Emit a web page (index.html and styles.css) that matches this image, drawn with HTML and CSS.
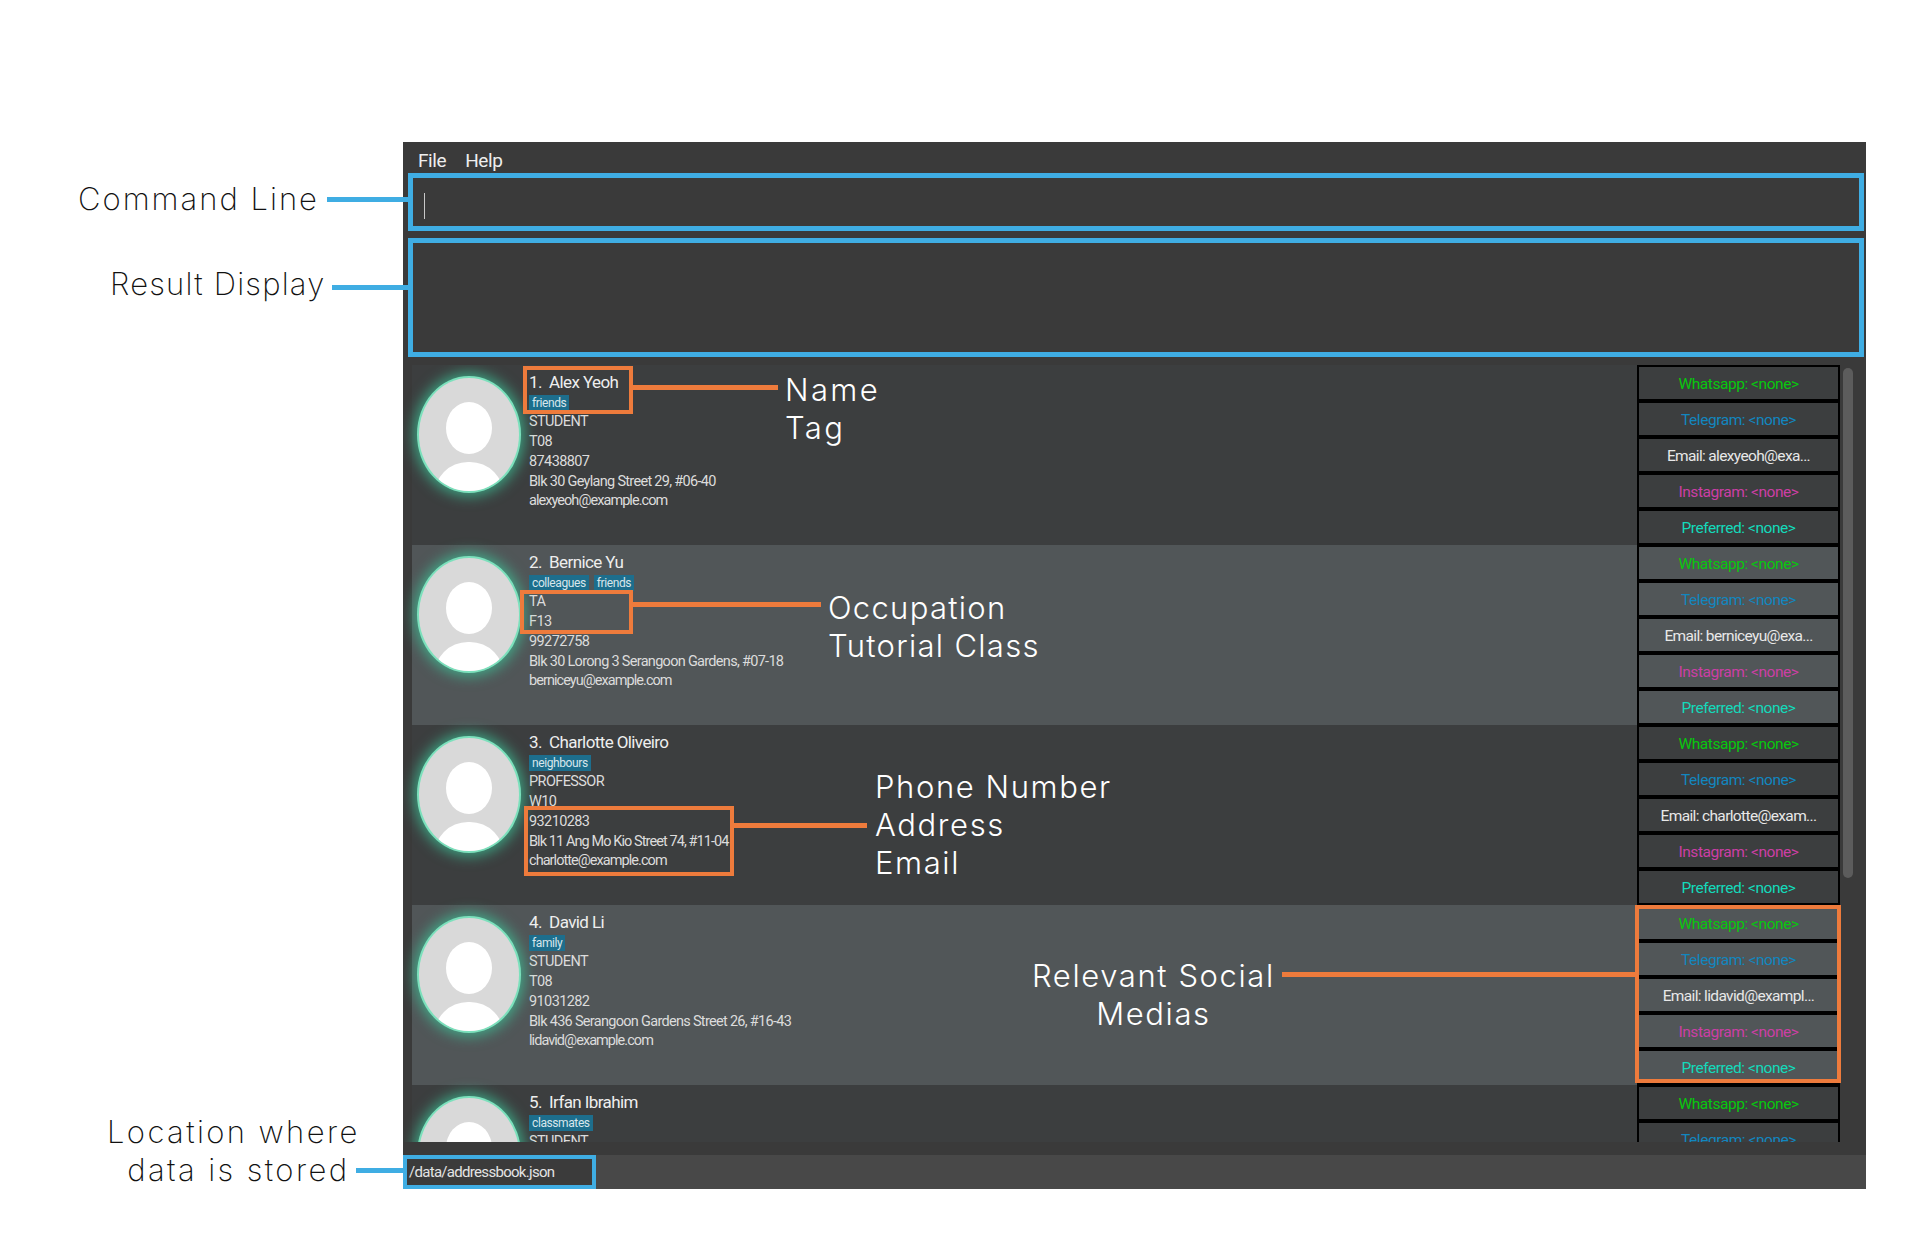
FILE: index.html
```html
<!DOCTYPE html>
<html lang="en">
<head>
  <meta charset="UTF-8">
  <title>Address Book - User Guide</title>
  <link rel="stylesheet" href="styles.css">
</head>
<body>

<div class="page">
  <div class="app">
    <div class="menu-bar">
      <span>File</span>
      <span>Help</span>
    </div>
    <div class="command-box"><div class="caret"></div></div>
    <div class="result-box"></div>

    <div class="list-wrap">
      <div class="list">

        <div class="row">
          <div class="avatar"></div>
          <div class="details">
            <div class="name">1.&nbsp; Alex Yeoh</div>
            <div class="tags"><span class="tag">friends</span></div>
            <div>STUDENT</div>
            <div>T08</div>
            <div>87438807</div>
            <div class="addr">Blk 30 Geylang Street 29, #06-40</div>
            <div class="mail">alexyeoh@example.com</div>
          </div>
          <div class="socials">
            <div class="social whatsapp">Whatsapp: &lt;none&gt;</div>
            <div class="social telegram">Telegram: &lt;none&gt;</div>
            <div class="social email">Email: alexyeoh@exa...</div>
            <div class="social instagram">Instagram: &lt;none&gt;</div>
            <div class="social preferred">Preferred: &lt;none&gt;</div>
          </div>
        </div>

        <div class="row">
          <div class="avatar"></div>
          <div class="details">
            <div class="name">2.&nbsp; Bernice Yu</div>
            <div class="tags"><span class="tag">colleagues</span><span class="tag">friends</span></div>
            <div>TA</div>
            <div>F13</div>
            <div>99272758</div>
            <div class="addr">Blk 30 Lorong 3 Serangoon Gardens, #07-18</div>
            <div class="mail">berniceyu@example.com</div>
          </div>
          <div class="socials">
            <div class="social whatsapp">Whatsapp: &lt;none&gt;</div>
            <div class="social telegram">Telegram: &lt;none&gt;</div>
            <div class="social email">Email: berniceyu@exa...</div>
            <div class="social instagram">Instagram: &lt;none&gt;</div>
            <div class="social preferred">Preferred: &lt;none&gt;</div>
          </div>
        </div>

        <div class="row">
          <div class="avatar"></div>
          <div class="details">
            <div class="name">3.&nbsp; Charlotte Oliveiro</div>
            <div class="tags"><span class="tag">neighbours</span></div>
            <div>PROFESSOR</div>
            <div>W10</div>
            <div>93210283</div>
            <div class="addr addr-tight">Blk 11 Ang Mo Kio Street 74, #11-04</div>
            <div class="mail">charlotte@example.com</div>
          </div>
          <div class="socials">
            <div class="social whatsapp">Whatsapp: &lt;none&gt;</div>
            <div class="social telegram">Telegram: &lt;none&gt;</div>
            <div class="social email">Email: charlotte@exam...</div>
            <div class="social instagram">Instagram: &lt;none&gt;</div>
            <div class="social preferred">Preferred: &lt;none&gt;</div>
          </div>
        </div>

        <div class="row">
          <div class="avatar"></div>
          <div class="details">
            <div class="name">4.&nbsp; David Li</div>
            <div class="tags"><span class="tag">family</span></div>
            <div>STUDENT</div>
            <div>T08</div>
            <div>91031282</div>
            <div class="addr">Blk 436 Serangoon Gardens Street 26, #16-43</div>
            <div class="mail">lidavid@example.com</div>
          </div>
          <div class="socials">
            <div class="social whatsapp">Whatsapp: &lt;none&gt;</div>
            <div class="social telegram">Telegram: &lt;none&gt;</div>
            <div class="social email">Email: lidavid@exampl...</div>
            <div class="social instagram">Instagram: &lt;none&gt;</div>
            <div class="social preferred">Preferred: &lt;none&gt;</div>
          </div>
        </div>

        <div class="row">
          <div class="avatar"></div>
          <div class="details">
            <div class="name">5.&nbsp; Irfan Ibrahim</div>
            <div class="tags"><span class="tag">classmates</span></div>
            <div>STUDENT</div>
          </div>
          <div class="socials">
            <div class="social whatsapp">Whatsapp: &lt;none&gt;</div>
            <div class="social telegram">Telegram: &lt;none&gt;</div>
          </div>
        </div>

      </div>
      <div class="scroll-track"><div class="scroll-thumb"></div></div>
    </div>

    <div class="status-bar">
      <div class="save-path">/data/addressbook.json</div>
    </div>
  </div>

  <!-- callouts drawn over the screenshot -->
  <div class="box box-name"></div>
  <div class="box box-job"></div>
  <div class="box box-contact"></div>
  <div class="box box-social"></div>

  <div class="line orange line-name"></div>
  <div class="line orange line-job"></div>
  <div class="line orange line-contact"></div>
  <div class="line orange line-social"></div>
  <div class="line blue line-command"></div>
  <div class="line blue line-result"></div>
  <div class="line blue line-path"></div>

  <div class="note on-dark note-name">Name<br>Tag</div>
  <div class="note on-dark note-job">Occupation<br>Tutorial Class</div>
  <div class="note on-dark note-contact">Phone Number<br>Address<br>Email</div>
  <div class="note on-dark note-social">Relevant Social<br>Medias</div>
  <div class="note note-command">Command Line</div>
  <div class="note note-result">Result Display</div>
  <div class="note note-path">Location where<br><span class="note-path-end">data is stored</span></div>
</div>

</body>
</html>
```

FILE: styles.css
```css
body {
  margin: 0;
  background: #fff;
  font-family: "Roboto", "Liberation Sans", sans-serif;
}

.page {
  position: relative;
  width: 1920px;
  height: 1246px;
  padding: 142px 0 0 403px;
  box-sizing: border-box;
  overflow: hidden;
}

.app {
  width: 1463px;
  height: 1047px;
  background: #3a3a3a;
  display: flex;
  flex-direction: column;
  color: #e4e4e4;
}

.menu-bar {
  height: 31px;
  padding: 5px 0 0 15px;
  box-sizing: border-box;
  display: flex;
  gap: 19px;
  font-size: 19px;
  letter-spacing: -0.4px;
  line-height: 28px;
  color: #eee;
}

.command-box,
.result-box {
  margin: 0 2px 0 5px;
  border: 5px solid #3fade3;
  box-sizing: border-box;
}

.command-box {
  height: 58px;
  padding: 15px 0 0 11px;
}

.caret {
  width: 1px;
  height: 26px;
  background: #c8c8c8;
}

.result-box {
  height: 119px;
  margin-top: 7px;
}

.list-wrap {
  height: 777px;
  margin-top: 8px;
  display: flex;
  overflow: hidden;
}

.list {
  width: 1428px;
  margin-left: 9px;
  flex-shrink: 0;
}

.row {
  height: 180px;
  display: flex;
  background: #3c3e3f;
}

.row:nth-child(even) {
  background: #515658;
}

.avatar {
  position: relative;
  width: 100px;
  height: 113px;
  margin: 13px 0 0 7px;
  flex-shrink: 0;
  border-radius: 50%;
  overflow: hidden;
  background: #d9d9d9;
  box-shadow: 0 0 0 2px #7ce0bc, 0 0 14px 5px rgba(60, 200, 155, 0.75);
}

.avatar::before {
  content: "";
  position: absolute;
  left: 27px;
  top: 24px;
  width: 46px;
  height: 52px;
  border-radius: 50%;
  background: #fff;
}

.avatar::after {
  content: "";
  position: absolute;
  left: 15px;
  top: 84px;
  width: 70px;
  height: 50px;
  border-radius: 34px 34px 0 0;
  background: #fff;
}

.details {
  flex: 1;
  padding: 8px 0 0 10px;
  font-size: 14.5px;
  line-height: 19.7px;
  letter-spacing: -0.6px;
  color: #dcdcdc;
}

.addr {
  letter-spacing: -0.7px;
}

.addr-tight {
  letter-spacing: -0.92px;
}

.mail {
  letter-spacing: -0.95px;
}

.name {
  font-size: 17px;
  letter-spacing: -0.6px;
  color: #eee;
}

.tags {
  display: flex;
  gap: 5px;
  height: 19.7px;
  align-items: center;
}

.tag {
  height: 16px;
  padding: 0 3px;
  line-height: 16px;
  font-size: 12px;
  letter-spacing: -0.4px;
  background: #1d6e8d;
  color: #d8e6ec;
}

.socials {
  width: 203px;
  flex-shrink: 0;
}

.social {
  height: 36px;
  border: 2px solid #000;
  box-sizing: border-box;
  text-align: center;
  font-size: 15.5px;
  line-height: 34px;
  letter-spacing: -0.45px;
}

.whatsapp { color: #07c80d; }
.telegram { color: #1286bf; }
.email { color: #e8e8e8; letter-spacing: -0.65px; }
.instagram { color: #cc3fa5; }
.preferred { color: #13dabb; }

.scroll-track {
  flex: 1;
  padding: 3px 0 0 3px;
}

.scroll-thumb {
  width: 10px;
  height: 510px;
  border-radius: 5px;
  background: #5c5c5c;
}

.status-bar {
  height: 34px;
  margin-top: 13px;
  background: #484848;
}

.save-path {
  width: 193px;
  height: 34px;
  border: 4px solid #3fade3;
  box-sizing: border-box;
  background: #3b3b3b;
  padding-left: 2px;
  font-size: 15px;
  line-height: 26px;
  letter-spacing: -0.7px;
  color: #e4e4e4;
}

/* callouts */
.box {
  position: absolute;
  border: 4px solid #ee7b3c;
  box-sizing: border-box;
}

.box-name { left: 523px; top: 366px; width: 110px; height: 48px; }
.box-job { left: 520px; top: 590px; width: 113px; height: 44px; }
.box-contact { left: 524px; top: 806px; width: 210px; height: 70px; }
.box-social { left: 1635px; top: 905px; width: 206px; height: 178px; }

.line {
  position: absolute;
  height: 5px;
}

.orange { background: #ee7b3c; }
.blue { background: #3fade3; }

.line-name { left: 633px; top: 385px; width: 145px; }
.line-job { left: 633px; top: 602px; width: 188px; }
.line-contact { left: 734px; top: 823px; width: 133px; }
.line-social { left: 1282px; top: 972px; width: 353px; }
.line-command { left: 327px; top: 197px; width: 81px; }
.line-result { left: 332px; top: 285px; width: 76px; }
.line-path { left: 356px; top: 1168px; width: 47px; }

.note {
  position: absolute;
  font-family: "Inter", "Liberation Sans", sans-serif;
  font-weight: 200;
  font-size: 31px;
  line-height: 38px;
  color: #111;
  white-space: nowrap;
}

.on-dark {
  color: #fff;
  font-weight: 300;
}

.note-name { left: 785px; top: 371px; letter-spacing: 2.4px; }
.note-job { left: 828px; top: 589px; letter-spacing: 1.3px; }
.note-contact { left: 875px; top: 768px; letter-spacing: 1.6px; }
.note-social { left: 1032px; top: 957px; letter-spacing: 1.6px; text-align: center; }
.note-command { left: 78px; top: 180px; letter-spacing: 2px; }
.note-result { left: 110px; top: 265px; letter-spacing: 1.2px; }
.note-path { left: 107px; top: 1113px; letter-spacing: 2.4px; text-align: center; }
.note-path-end { margin-left: 10px; }
```
